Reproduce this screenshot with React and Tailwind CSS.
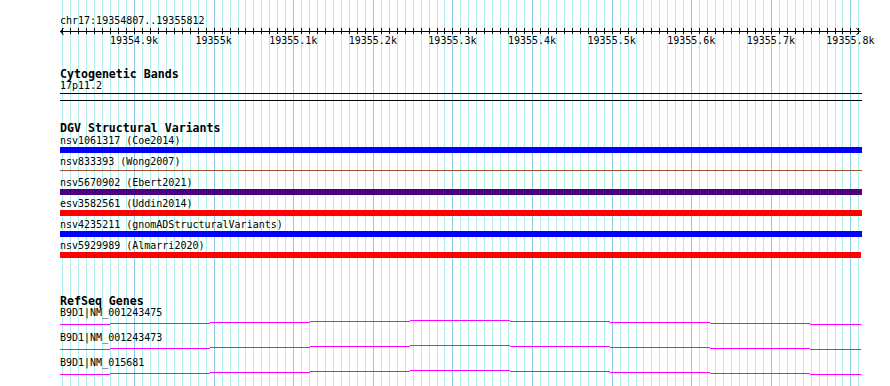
const START = 19354807
const END = 19355812
const px = (bp) => 60 + ((bp - START) * 800) / (END - START)

const GRID = []
for (let bp = 19354810; bp <= 19355810; bp += 10) {
  GRID.push({ x: Math.round(px(bp)), major: bp % 100 === 0 })
}

const LABELS = []
for (let bp = 19354900; bp <= 19355800; bp += 100) {
  const k = bp / 1000
  LABELS.push({ x: px(bp), text: `${Number.isInteger(k) ? k : k.toFixed(1)}k` })
}

const VARIANTS = [
  { label: 'nsv1061317 (Coe2014)', color: 'bg-[#0000ff]', thin: false },
  { label: 'nsv833393 (Wong2007)', color: 'bg-[#a0522d]', thin: true },
  { label: 'nsv5670902 (Ebert2021)', color: 'bg-[#4b0082]', thin: false },
  { label: 'esv3582561 (Uddin2014)', color: 'bg-[#ff0000]', thin: false },
  { label: 'nsv4235211 (gnomADStructuralVariants)', color: 'bg-[#0000ff]', thin: false },
  { label: 'nsv5929989 (Almarri2020)', color: 'bg-[#ff0000]', thin: false, short: true },
]

const GENES = ['B9D1|NM_001243475', 'B9D1|NM_001243473', 'B9D1|NM_015681']

// intron line, drawn as stepped segments like the original canvas
const INTRON = [
  [0, 50, 5], [50, 150, 4], [150, 250, 3], [250, 350, 2], [350, 450, 1],
  [450, 550, 2], [550, 650, 3], [650, 750, 4], [750, 801, 5],
]

function Ruler() {
  const ticks = []
  for (let bp = 19354810; bp <= 19355810; bp += 10) ticks.push(Math.round(px(bp)) - 60 + 0.5)
  return (
    <svg width="802" height="8" shapeRendering="crispEdges" className="block">
      <rect x="0" y="4" width="801" height="1" fill="#000" />
      {ticks.map((x, i) => (
        <rect key={i} x={x - 0.5} y="1" width="1" height="6" fill="#000" />
      ))}
      <path d="M3.5 1 L0.5 4.5 L3.5 8" stroke="#000" fill="none" shapeRendering="auto" />
      <path d="M796.5 1 L799.5 4.5 L796.5 8" stroke="#000" fill="none" shapeRendering="auto" />
    </svg>
  )
}

function IntronLine() {
  return (
    <svg width="801" height="13" shapeRendering="crispEdges" className="block">
      {INTRON.map(([a, b, y], i) => (
        <rect key={i} x={a} y={y} width={b - a} height="1" fill="#ff00ff" />
      ))}
    </svg>
  )
}

export default function App() {
  return (
    <div className="relative w-[890px] h-[386px] overflow-hidden bg-white text-black font-['DejaVu_Sans_Mono',monospace] text-[10px] leading-[12px]">
      {/* grid */}
      {GRID.map((g, i) => (
        <div
          key={i}
          className={`absolute top-0 bottom-0 w-px ${g.major ? 'bg-[#8ccbea]' : 'bg-[#b0eeee]'}`}
          style={{ left: g.x }}
        />
      ))}

      <div className="relative pl-[60px] pt-[15px]">
        <div className="h-[12px]">chr17:19354807..19355812</div>
        <Ruler />
        <div className="relative h-[12px]">
          {LABELS.map((l) => (
            <span key={l.text} className="absolute top-0 -translate-x-1/2 whitespace-nowrap" style={{ left: l.x - 60 }}>
              {l.text}
            </span>
          ))}
        </div>

        {/* Cytogenetic Bands */}
        <div className="mt-[21px] h-[12px] font-bold text-[11.6px] leading-[12px]">Cytogenetic Bands</div>
        <div className="h-[12px]">17p11.2</div>
        <div className="mt-px w-[802px] h-[8px] border-y border-black" />

        {/* DGV Structural Variants */}
        <div className="mt-[21px] h-[12px] font-bold text-[11.6px] leading-[12px]">DGV Structural Variants</div>
        <div className="mt-px flex flex-col">
          {VARIANTS.map((v) => (
            <div key={v.label} className="h-[21px]">
              <div className="h-[12px] whitespace-nowrap">{v.label}</div>
              {v.thin ? (
                <div className="h-[6px] pt-[2px]">
                  <div className={`h-px w-[802px] ${v.color}`} />
                </div>
              ) : (
                <div className={`h-[6px] ${v.short ? 'w-[801px]' : 'w-[802px]'} ${v.color}`} />
              )}
            </div>
          ))}
        </div>

        {/* RefSeq Genes */}
        <div className="mt-[34px] h-[12px] font-bold text-[11.6px] leading-[12px]">RefSeq Genes</div>
        <div className="flex flex-col">
          {GENES.map((g) => (
            <div key={g} className="h-[25px]">
              <div className="h-[12px] whitespace-nowrap">{g}</div>
              <IntronLine />
            </div>
          ))}
        </div>
      </div>
    </div>
  )
}
